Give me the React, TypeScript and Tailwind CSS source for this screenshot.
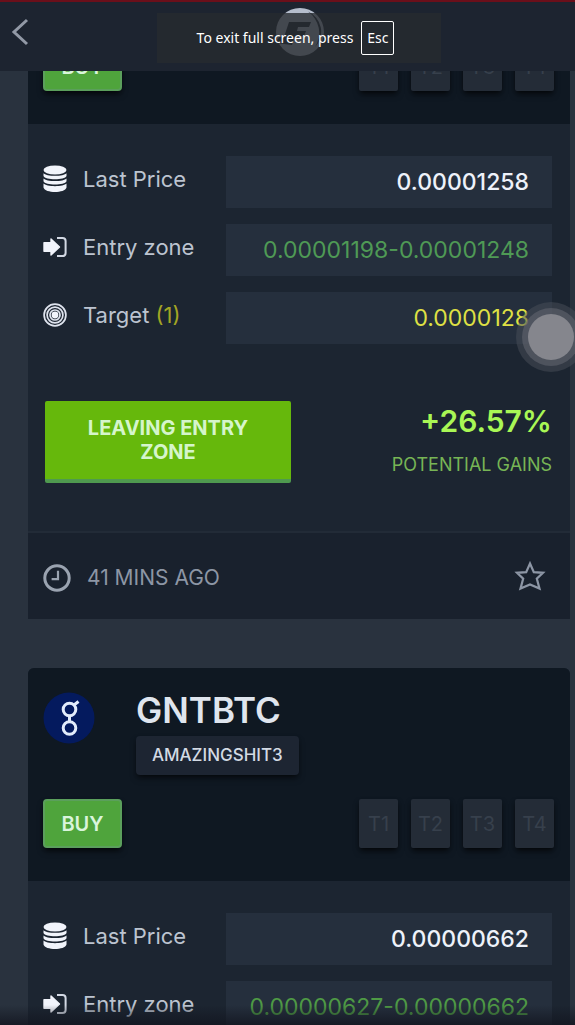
import type { ReactNode } from "react";

function CoinsIcon() {
  return (
    <svg viewBox="0 0 24 28" className="h-7 w-6" fill="#f1f4fb" aria-hidden="true">
      <ellipse cx="12" cy="5" rx="11.5" ry="4.6" />
      <path d="M0.5 8.2C3 11.6 21 11.6 23.5 8.2V11C22 15.4 2 15.4 0.5 11Z" />
      <path d="M0.5 13.4C3 16.8 21 16.8 23.5 13.4V16.2C22 20.6 2 20.6 0.5 16.2Z" />
      <path d="M0.5 18.6C3 22 21 22 23.5 18.6V22.6C22 28.6 2 28.6 0.5 22.6Z" />
    </svg>
  );
}

function EntryIcon() {
  return (
    <svg viewBox="0 0 24 24" className="size-6" aria-hidden="true">
      <path
        d="M1 7.8H8V4L16.5 12L8 20V16.2H1Z"
        fill="#f1f4fb"
        stroke="#f1f4fb"
        strokeWidth="1.4"
        strokeLinejoin="round"
      />
      <path d="M14 2.9H19.5Q22.6 2.9 22.6 6V18Q22.6 21.1 19.5 21.1H14" fill="none" stroke="#d3d9e4" strokeWidth="2" />
    </svg>
  );
}

function TargetIcon() {
  return (
    <svg viewBox="0 0 24 24" className="size-6" fill="none" stroke="#dfe4ee" strokeWidth="1.7" aria-hidden="true">
      <circle cx="12" cy="12" r="10.9" />
      <circle cx="12" cy="12" r="7.9" />
      <circle cx="12" cy="12" r="5" />
      <circle cx="12" cy="12" r="3.4" fill="#f1f4fb" stroke="none" />
    </svg>
  );
}

function ClockIcon() {
  return (
    <svg viewBox="0 0 28 28" className="size-7" fill="none" stroke="#9aa3b0" aria-hidden="true">
      <circle cx="14" cy="14" r="12.2" strokeWidth="3" />
      <path d="M15 6.8V15.2H8.6" strokeWidth="2.2" />
    </svg>
  );
}

function StarIcon() {
  return (
    <svg viewBox="0 0 32 32" className="size-8" fill="none" stroke="#8d96a5" strokeWidth="2.2" strokeLinejoin="miter" aria-hidden="true">
      <path d="M16 3.5L19.8 12.2L29 12.8L22.8 18.6L25.5 28.6L16 24.4L6.5 28.6L9.2 18.6L3 12.8L12.2 12.2Z" />
    </svg>
  );
}

function GolemLogo() {
  return (
    <svg viewBox="0 0 52 52" className="size-[52px]" fill="none" aria-hidden="true">
      <circle cx="26" cy="26" r="25.5" fill="#041a5e" />
      <g stroke="#e3ecfb" strokeWidth="3">
        <circle cx="26.5" cy="17.5" r="6.3" />
        <circle cx="26.5" cy="36" r="6.3" />
        <path d="M26.5 24V30M31 13L35.5 9.5" />
      </g>
    </svg>
  );
}

function BrandLogo() {
  return (
    <svg viewBox="0 0 50 50" className="size-[50px]" aria-hidden="true">
      <circle cx="25" cy="25" r="24" fill="#b6becd" />
      <path d="M33 4.5A22 22 0 0 1 40 40A26 26 0 0 0 33 4.5Z" fill="#1d2430" />
      <path d="M14 15H36L34 20H23L22 24H31L29 29H20L17 38L1 36L4 30H9Z" fill="#1d2430" />
    </svg>
  );
}

function ActionRow() {
  return (
    <div className="flex items-center justify-between">
      <button
        type="button"
        className="h-[49px] w-[79px] rounded-sm border-2 border-[#5b9f5c] bg-[#4fa43c] text-xl font-semibold text-[#d9f5dc] shadow-md shadow-black/60"
      >
        BUY
      </button>
      <ul className="flex gap-[13px]">
        {["T1", "T2", "T3", "T4"].map((target) => (
          <li
            key={target}
            className="flex h-[49px] w-[39px] items-center justify-center rounded-xs bg-[#242c37] text-xl text-[#37404c] shadow-md shadow-black/60"
          >
            {target}
          </li>
        ))}
      </ul>
    </div>
  );
}

type RowProps = { icon: ReactNode; label: ReactNode; value: string; tone: string };

function Row({ icon, label, value, tone }: RowProps) {
  return (
    <div className="flex items-center">
      <dt className="flex w-[183px] shrink-0 items-center gap-4 pb-1.5 text-[22px] leading-7 text-[#bcc4d0]">
        {icon}
        <span>{label}</span>
      </dt>
      <dd className={`flex h-[52px] flex-1 items-center justify-end bg-[#252f3d] pr-[23px] text-[23px] ${tone}`}>
        {value}
      </dd>
    </div>
  );
}

export default function App() {
  return (
    <div className="relative flex h-screen flex-col overflow-hidden bg-[#29323e] font-['Inter',sans-serif]">
      <header className="relative z-10 flex h-[71px] shrink-0 items-start border-t-2 border-[#6b0f1a] bg-[#1d2430]">
        <button type="button" aria-label="Back" className="mt-3.5 ml-2.5">
          <svg viewBox="0 0 22 32" className="h-8 w-[22px]" fill="none" stroke="#9299a6" strokeWidth="3" aria-hidden="true">
            <path d="M17 4L4 16L17 28" />
          </svg>
        </button>
        <div className="absolute top-[5px] left-1/2 -translate-x-1/2 pl-6">
          <BrandLogo />
        </div>
        <div
          role="status"
          className="absolute top-[11px] left-1/2 flex h-[50px] w-[284px] -translate-x-[131px] items-center justify-center gap-2 bg-[#272b30]/80 pb-px pr-1.5 font-['Noto_Sans','Open_Sans',sans-serif] text-sm whitespace-nowrap text-white"
        >
          <span>To exit full screen, press</span>
          <kbd className="flex h-[34px] w-[33px] items-center justify-center rounded-xs border border-white font-['Noto_Sans','Open_Sans',sans-serif]">
            Esc
          </kbd>
        </div>
      </header>

      <main className="flex min-h-0 flex-1 flex-col gap-[49px] overflow-hidden pr-[5px] pl-7">
        <article className="shrink-0 bg-[#1c2531]">
          <div className="-mt-[29px] bg-[#0f1822] pr-4 pb-[33px] pl-[15px]">
            <ActionRow />
          </div>
          <dl className="flex flex-col gap-4 pt-8 pr-[18px] pl-[15px]">
            <Row icon={<CoinsIcon />} label="Last Price" value="0.00001258" tone="font-medium text-[#eef2fa]" />
            <Row icon={<EntryIcon />} label="Entry zone" value="0.00001198-0.00001248" tone="text-[#4f9a55]" />
            <Row
              icon={<TargetIcon />}
              label={
                <>
                  Target <span className="text-[#a3a524]">(1)</span>
                </>
              }
              value="0.0000128"
              tone="text-[#dfe044]"
            />
          </dl>
          <div className="flex items-start justify-between pt-[57px] pr-[18px] pb-12 pl-[17px]">
            <button
              type="button"
              className="h-[82px] w-[246px] rounded-xs border-b-4 border-[#4f9a4f] bg-[#66b80c] px-9 text-xl leading-6 font-bold text-[#d5f5cb]"
            >
              LEAVING ENTRY ZONE
            </button>
            <div className="text-right">
              <p className="text-[30px] leading-10 font-semibold text-[#a9f755]">+26.57%</p>
              <p className="mt-2.5 text-lg leading-7 text-[#77b555]">POTENTIAL GAINS</p>
            </div>
          </div>
          <footer className="flex h-[88px] items-center justify-between border-t-2 border-[#222b37] bg-[#19212d] pr-6 pl-[15px] text-[#8d96a5]">
            <div className="flex items-center gap-4 pt-1">
              <ClockIcon />
              <time className="text-[21px]">41 MINS AGO</time>
            </div>
            <button type="button" aria-label="Add to favourites">
              <StarIcon />
            </button>
          </footer>
        </article>

        <article className="shrink-0 overflow-hidden rounded-t-md bg-[#1c2531]">
          <div className="bg-[#0f1822] pt-[22px] pr-4 pb-[33px] pl-[15px]">
            <div className="flex h-[109px] items-start gap-[41px]">
              <div className="mt-0.5">
                <GolemLogo />
              </div>
              <div>
                <h2 className="text-[35px] leading-10 font-semibold text-[#dfe5ee]">GNTBTC</h2>
                <span className="mt-1.5 flex h-[39px] w-fit items-center rounded-sm bg-[#1d2532] px-4 text-[17px] font-medium text-[#d3dae4] shadow-md shadow-black/50">
                  AMAZINGSHIT3
                </span>
              </div>
            </div>
            <ActionRow />
          </div>
          <dl className="flex flex-col gap-4 pt-8 pr-[18px] pl-[15px]">
            <Row icon={<CoinsIcon />} label="Last Price" value="0.00000662" tone="font-medium text-[#eef2fa]" />
            <Row icon={<EntryIcon />} label="Entry zone" value="0.00000627-0.00000662" tone="text-[#4f9a45]" />
          </dl>
        </article>
      </main>

      <button
        type="button"
        aria-label="Assistive touch"
        className="absolute top-[302px] -right-[11px] z-20 flex size-[70px] items-center justify-center rounded-full bg-[#4a4f5a]/50"
      >
        <span className="flex size-[58px] items-center justify-center rounded-full bg-[#60646e]/60">
          <span className="size-[46px] rounded-full bg-[#85868d]" />
        </span>
      </button>
      <div className="pointer-events-none absolute inset-x-0 bottom-0 h-5 bg-linear-to-b from-transparent to-[#12151f]/80" />
    </div>
  );
}
